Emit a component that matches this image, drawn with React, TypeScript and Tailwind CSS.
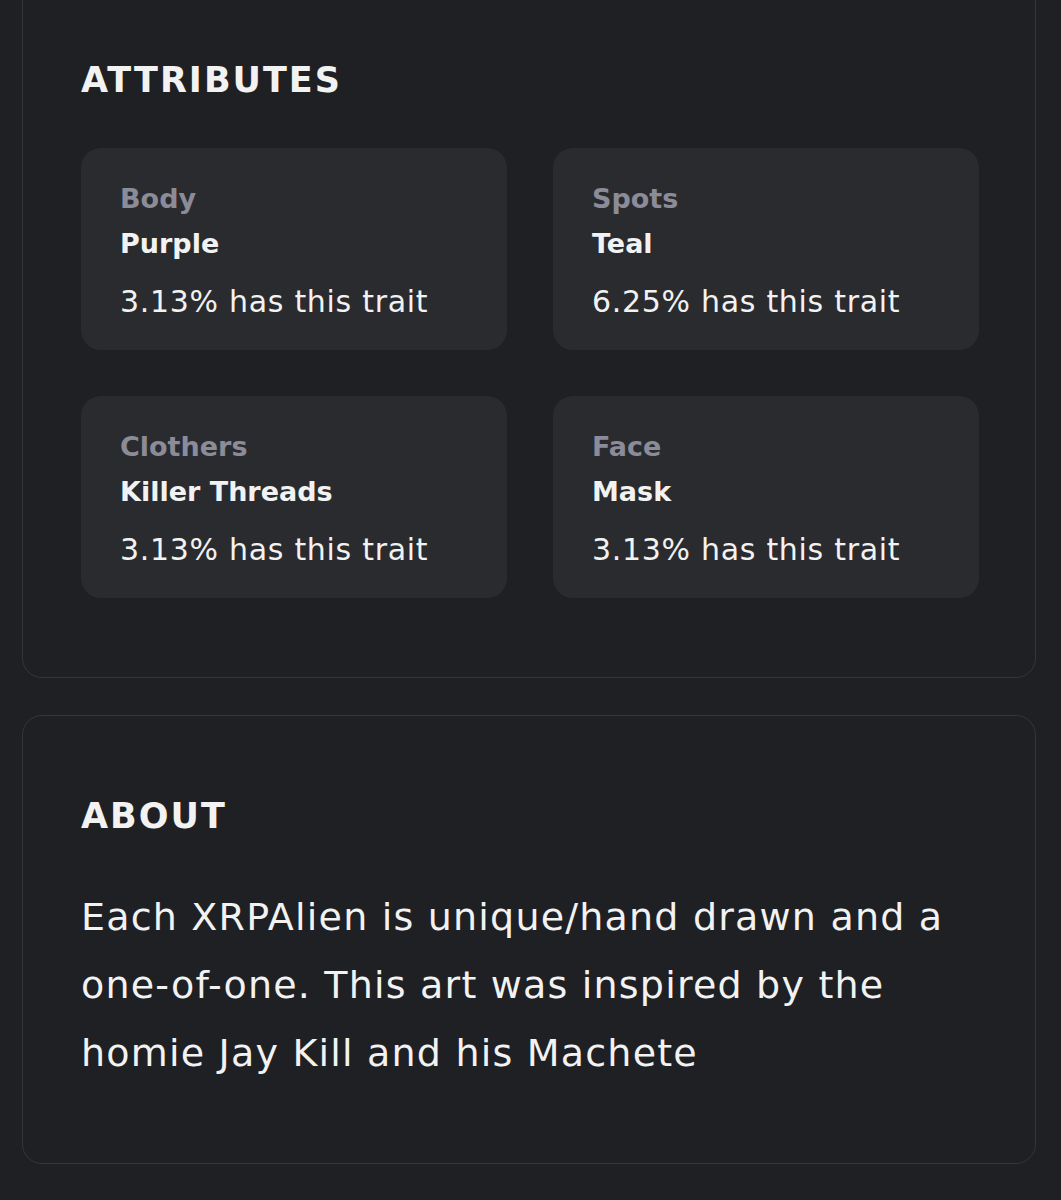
import React from 'react';

type Trait = { type: string; value: string; rarity: string };

const traits: Trait[] = [
  { type: 'Body', value: 'Purple', rarity: '3.13%' },
  { type: 'Spots', value: 'Teal', rarity: '6.25%' },
  { type: 'Clothers', value: 'Killer Threads', rarity: '3.13%' },
  { type: 'Face', value: 'Mask', rarity: '3.13%' },
];

const TraitCard = ({ trait }: { trait: Trait }) => (
  <div className="bg-[#2a2b2f] rounded-[20px] pl-[39px] pr-6 pt-[28px] pb-[26px]">
    <p className="text-[27px] leading-[45px] font-bold text-[#8b8c97]">{trait.type}</p>
    <p className="text-[27px] leading-[45px] font-bold text-[#f2f2f2]">{trait.value}</p>
    <p className="mt-[13px] text-[30px] leading-[45px] tracking-[0.7px] text-[#f2f2f2]">
      {trait.rarity} has this trait
    </p>
  </div>
);

export default function App() {
  return (
    <div
      className="min-h-[1200px] bg-[#1e2023] pl-[22px] pr-[25px] pb-10 overflow-hidden"
      style={{ fontFamily: '"DejaVu Sans", "Liberation Sans", sans-serif' }}
    >
      <section className="-mt-[30px] border border-[#34363a] rounded-[20px] pl-[58px] pr-[56px] pt-[87px] pb-[79px]">
        <h2 className="text-[35px] leading-[45px] font-bold tracking-[2px] text-[#f2f2f2]">ATTRIBUTES</h2>
        <div className="mt-[45px] grid grid-cols-2 gap-[46px]">
          {traits.map((t) => (
            <TraitCard key={t.type} trait={t} />
          ))}
        </div>
      </section>

      <section className="mt-[37px] border border-[#34363a] rounded-[20px] pl-[58px] pr-[56px] pt-[78px] pb-[76px]">
        <h2 className="text-[35px] leading-[45px] font-bold tracking-[2px] text-[#f2f2f2]">ABOUT</h2>
        <p className="mt-[44px] text-[38px] leading-[68px] tracking-[1.2px] text-[#f2f2f2]">
          Each XRPAlien is unique/hand drawn and a one-of-one. This art was inspired by the homie Jay Kill and his
          Machete
        </p>
      </section>
    </div>
  );
}
